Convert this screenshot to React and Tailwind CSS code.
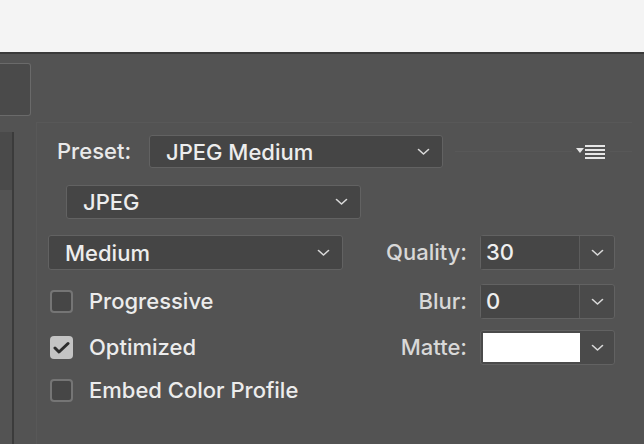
import React from 'react';

const Chevron = () => (
    <svg width="13" height="8" viewBox="0 0 13 8" fill="none">
        <path d="M1.5 1.5 L6.5 6 L11.5 1.5" stroke="#d9d9d9" strokeWidth="1.6" strokeLinecap="round" strokeLinejoin="round" />
    </svg>
);

const Select = ({ label, className = '' }) => (
    <div className={`flex items-center justify-between bg-[#454545] border border-[#626262] rounded-[3px] pl-[16px] pr-[12px] ${className}`}>
        <span className="text-[22px] font-medium text-[#ededed] leading-none">{label}</span>
        <Chevron />
    </div>
);

const Combo = ({ value, matte }) => (
    <div className="flex w-[135px] h-[35px] border border-[#626262] rounded-[3px] bg-[#4a4a4a]">
        {matte ? (
            <div className="w-[97px] m-[2px] mr-0 bg-white" />
        ) : (
            <div className="w-[99px] bg-[#464646] border-r border-[#5c5c5c] flex items-center pl-[5px] text-[22px] font-medium text-[#efefef]">
                {value}
            </div>
        )}
        <div className="flex-1 flex items-center justify-center">
            <Chevron />
        </div>
    </div>
);

const Checkbox = ({ checked }) =>
    checked ? (
        <div className="w-[23px] h-[23px] rounded-[4px] bg-[#c4c4c4] flex items-center justify-center">
            <svg width="17" height="13" viewBox="0 0 17 13" fill="none">
                <path d="M2 7 L6 11 L15 2.5" stroke="#2d2d2d" strokeWidth="3" strokeLinecap="round" strokeLinejoin="round" />
            </svg>
        </div>
    ) : (
        <div className="w-[23px] h-[23px] rounded-[4px] bg-[#464646] border-2 border-[#757575]" />
    );

const CheckRow = ({ label, checked }) => (
    <div className="flex items-center pl-[13px]">
        <Checkbox checked={checked} />
        <span className="ml-[16px] text-[22px] font-medium text-[#ececec]">{label}</span>
    </div>
);

const MenuIcon = () => (
    <svg width="30" height="14" viewBox="0 0 30 14">
        <path d="M0 3 L8 3 L4 8 Z" fill="#e6e6e6" />
        <rect x="9" y="0" width="20" height="2" fill="#e6e6e6" />
        <rect x="9" y="4" width="20" height="2" fill="#e6e6e6" />
        <rect x="9" y="8" width="20" height="2" fill="#e6e6e6" />
        <rect x="9" y="12" width="20" height="2" fill="#e6e6e6" />
    </svg>
);

export default function App() {
    return (
        <div className="w-[644px] h-[444px] overflow-hidden bg-[#535353] flex flex-col" style={{ fontFamily: 'Inter, "Noto Sans", sans-serif' }}>
            <div className="h-[54px] shrink-0 bg-[#f4f4f4] border-b-2 border-[#3a3a3a]" />

            <div className="h-[68px] shrink-0 pt-[9px]">
                <div className="w-[31px] h-[53px] bg-[#4a4a4a] border border-l-0 border-[#6a6a6a] rounded-r-[3px]" />
            </div>

            <div className="flex flex-1">
                <div className="w-[12px] pt-[10px]">
                    <div className="h-[58px] bg-[#4a4a4a]" />
                </div>
                <div className="w-[2px] mt-[10px] bg-[#3b3b3b]" />
                <div className="w-[22px]" />
                <div className="w-[596px] border-t border-l border-[#585858] flex flex-col">
                    <div className="flex items-center h-[33px] mt-[12px]">
                        <span className="ml-[20px] w-[92px] text-[22px] font-medium text-[#e9e9e9]">Preset:</span>
                        <Select label="JPEG Medium" className="w-[294px] h-[33px]" />
                        <div className="flex-1 ml-[12px] h-px bg-[#585858]" />
                        <div className="mx-[4px]">
                            <MenuIcon />
                        </div>
                        <div className="w-[22px] h-px bg-[#585858]" />
                    </div>

                    <div className="mt-[17px] ml-[29px]">
                        <Select label="JPEG" className="w-[295px] h-[34px]" />
                    </div>

                    <div className="flex items-center mt-[16px] h-[35px]">
                        <div className="w-[307px] pl-[11px]">
                            <Select label="Medium" className="w-[295px] h-[35px]" />
                        </div>
                        <span className="w-[123px] text-right text-[22px] font-medium text-[#d8d8d8]">Quality:</span>
                        <div className="ml-[13px]">
                            <Combo value="30" />
                        </div>
                    </div>

                    <div className="flex items-center mt-[14px] h-[35px]">
                        <div className="w-[307px]">
                            <CheckRow label="Progressive" />
                        </div>
                        <span className="w-[123px] text-right text-[22px] font-medium text-[#d8d8d8]">Blur:</span>
                        <div className="ml-[13px]">
                            <Combo value="0" />
                        </div>
                    </div>

                    <div className="flex items-center mt-[11px] h-[35px]">
                        <div className="w-[307px]">
                            <CheckRow label="Optimized" checked />
                        </div>
                        <span className="w-[123px] text-right text-[22px] font-medium text-[#d8d8d8]">Matte:</span>
                        <div className="ml-[13px]">
                            <Combo matte />
                        </div>
                    </div>

                    <div className="flex items-center mt-[8px] h-[35px]">
                        <CheckRow label="Embed Color Profile" />
                    </div>
                </div>
            </div>
        </div>
    );
}
